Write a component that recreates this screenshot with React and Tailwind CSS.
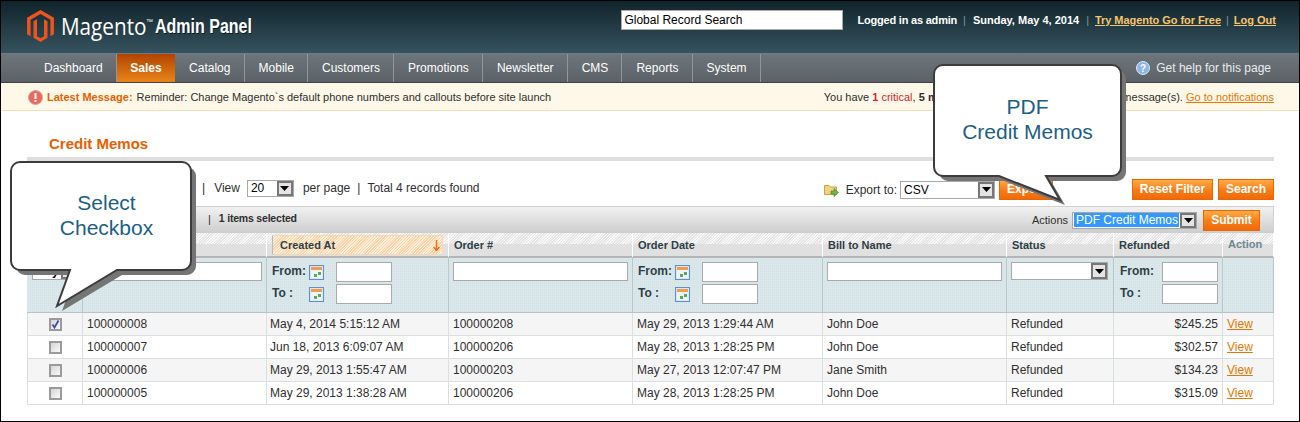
import React from "react";

const FONT = "font-['Liberation_Sans',Arial,sans-serif]";
const rows = [
  ["100000008", "May 4, 2014 5:15:12 AM", "100000208", "May 29, 2013 1:29:44 AM", "John Doe", "$245.25", true],
  ["100000007", "Jun 18, 2013 6:09:07 AM", "100000206", "May 28, 2013 1:28:25 PM", "John Doe", "$302.57", false],
  ["100000006", "May 29, 2013 1:55:47 AM", "100000203", "May 27, 2013 12:07:47 PM", "Jane Smith", "$134.23", false],
  ["100000005", "May 29, 2013 1:38:28 AM", "100000206", "May 28, 2013 1:28:25 PM", "John Doe", "$315.09", false],
];
const navItems = ["Dashboard", "Sales", "Catalog", "Mobile", "Customers", "Promotions", "Newsletter", "CMS", "Reports", "System"];

function Logo() {
  return (
    <svg width="27" height="32" viewBox="0 0 26 31" className="shrink-0">
      <path fill="#f0541e" d="M13 0 26 7.5V23.5L22.6 25.5V9.4L13 3.9 3.4 9.4V25.5L0 23.5V7.5Z" />
      <path fill="#f0541e" d="M6.2 11 9.6 9V25.4L13 27.4 16.4 25.4V9L19.8 11V27L13 31 6.2 27Z" />
    </svg>
  );
}

function Arrow() {
  return (
    <span className="flex h-full w-[16px] shrink-0 items-center justify-center border-2 border-[#777] bg-[#e4e4e4]">
      <svg width="9" height="5" viewBox="0 0 9 5"><path d="M0 0H9L4.500 5Z" fill="#000" /></svg>
    </span>
  );
}

function Select({ value, className }) {
  return (
    <div className={`flex items-center border border-[#a9a9a9] bg-white text-[12px] text-black ${className}`}>
      <span className="flex-1 truncate pl-[3px]">{value}</span>
      <Arrow />
    </div>
  );
}

function Btn({ children, className = "" }) {
  return (
    <button className={`h-[21px] border border-[#ed6502] bg-[linear-gradient(to_bottom,#ffac47,#f77c16_55%,#ed6a0a)] text-[12px] leading-[17px] font-bold text-white ${className}`}>
      {children}
    </button>
  );
}

function Calendar() {
  return (
    <svg width="15" height="15" viewBox="0 0 15 15" className="shrink-0">
      <rect x="0.500" y="0.500" width="14" height="14" fill="#dbe7f3" stroke="#5d8fc9" />
      <rect x="2" y="2" width="11" height="3" fill="#f59a4a" />
      <rect x="2" y="5" width="11" height="8" fill="#eef3f8" />
      <rect x="5" y="9" width="3" height="3" fill="#58ad58" />
      <rect x="9" y="7" width="3" height="3" fill="#58ad58" />
    </svg>
  );
}

function TextInput({ className }) {
  return <input readOnly className={`block border border-[#aaa] bg-white ${className}`} />;
}

function RangeRow({ label, cal }) {
  return (
    <div className="flex h-[20px] items-center">
      <span className="mb-[2px] w-[37px] text-[12px] font-bold text-[#2f3f45]">{label}</span>
      {cal ? <Calendar /> : <span className="w-[5px]" />}
      <TextInput className={cal ? "ml-[12px] h-[20px] w-[56px]" : "h-[20px] w-[56px]"} />
    </div>
  );
}

function Range({ cal = true }) {
  return (
    <div className={`flex flex-col gap-[2px] ${cal ? "pl-[5px]" : "pl-[6px]"}`}>
      <RangeRow label="From:" cal={cal} />
      <RangeRow label="To :" cal={cal} />
    </div>
  );
}

function Checkbox({ checked }) {
  return (
    <span className="mx-auto flex h-[13px] w-[13px] items-center justify-center border-2 border-[#9a9a9a] bg-[linear-gradient(135deg,#d5d5d5,#fafafa)]">
      {checked && (
        <svg width="9" height="9" viewBox="0 0 9 9"><path d="M1.500 4.500 3.500 7.500 7.500 0.500" fill="none" stroke="#3b4fa0" strokeWidth="1.800" /></svg>
      )}
    </span>
  );
}

function Callout({ box, d, children, textClass }) {
  return (
    <div className={`absolute ${box}`}>
      <svg className="absolute inset-0 h-full w-full" viewBox={children.viewBox}>
        <path d={d} fill="#757575" transform="translate(5 5)" />
        <path d={d} fill="#fff" stroke="#3c3c3c" strokeWidth="2" strokeLinejoin="miter" />
      </svg>
      <div className={`absolute text-center text-[21px] leading-[24.500px] text-[#1c5f88] ${textClass}`}>{children.text}</div>
    </div>
  );
}

const hatch = "border-r border-b-2 border-r-white border-b-[#b5b5b5] bg-[image:linear-gradient(to_bottom,transparent_50%,#e0e0e0_50%),repeating-linear-gradient(135deg,#f8f8f8_0,#f8f8f8_1px,#e4e4e4_1px,#e4e4e4_2px)] px-[5px] pt-[2px] text-left text-[11px] font-bold text-[#2f3f45]";
const filt = "border-r border-b border-r-[#bcc6c8] border-b-[#b9c3c5] bg-[#d2e1e5] bg-[image:linear-gradient(#dbe8eb_1px,transparent_1px),linear-gradient(90deg,#dbe8eb_1px,transparent_1px)] bg-[size:2px_2px] pt-[4px] text-left align-top";
const cell = "border-r border-b border-[#dadfe0] px-[4px] text-[12px] text-[#2f2f2f]";

export default function App() {
  return (
    <div className={`relative h-[422px] w-[1300px] overflow-hidden border border-black bg-white ${FONT}`}>
      {/* header */}
      <header className="flex h-[53px] items-start justify-between border-b border-[#64808a] bg-[linear-gradient(to_bottom,#10242b,#36535f)]">
        <div className="flex items-center pt-[9px] pl-[26px]">
          <Logo />
          <span className="ml-[7px] w-[85px] origin-left scale-x-[0.90] font-['Open_Sans',sans-serif] text-[23px] leading-[32px] text-white">Magento</span>
          <span className="mb-[8px] w-[8px] text-[7px] text-white">™</span>
          <span className="ml-px w-[96px] origin-left scale-x-[0.80] text-[20px] leading-[32px] font-bold whitespace-nowrap text-white [text-shadow:1px_1px_0_#0c1a1f]">Admin Panel</span>
        </div>
        <div className="flex items-center pt-[9px] pr-[23px] text-[11px] font-bold text-white">
          <input readOnly defaultValue="Global Record Search" className="h-[20px] w-[222px] border border-[#aaa] bg-white pl-[2px] text-[12px] font-normal text-black" />
          <span className="ml-[14px] tracking-[-0.2px]">Logged in as admin</span>
          <span className="mr-[7px] ml-[6px] font-normal text-[#7f97a0]">|</span>
          <span>Sunday, May 4, 2014</span>
          <span className="mr-[6px] ml-[7px] font-normal text-[#7f97a0]">|</span>
          <a className="tracking-[-0.05px] text-[#f8c56e] underline">Try Magento Go for Free</a>
          <span className="mx-[5px] font-normal text-[#7f97a0]">|</span>
          <a className="text-[#f8c56e] underline">Log Out</a>
        </div>
      </header>

      {/* nav */}
      <nav className="flex h-[29px] items-stretch justify-between border-b border-[#3e4347] bg-[linear-gradient(to_bottom,#6e757b,#5a6167)] pl-[29px] text-[12px] text-white">
        <ul className="flex">
          {navItems.map((n) =>
            n === "Sales" ? (
              <li key={n} className="flex items-center bg-[linear-gradient(to_bottom,#b24300,#e9851b)] px-[13.500px] font-bold">{n}</li>
            ) : (
              <li key={n} className={`flex items-center border-r border-[#8f979c] ${n === "Dashboard" ? "pr-[13px] pl-[14px]" : "pr-[13.100px] pl-[14px]"}`}>{n}</li>
            )
          )}
        </ul>
        <div className="flex items-center pr-[28px] text-[#e8ecee]">
          <svg width="14" height="14" viewBox="0 0 14 14" className="mr-[6px]">
            <circle cx="7" cy="7" r="6.500" fill="#8db8e6" stroke="#dbe9f7" />
            <text x="7" y="10.500" textAnchor="middle" fontSize="10" fontWeight="700" fill="#fff" fontFamily="Liberation Sans">?</text>
          </svg>
          <span>Get help for this page</span>
        </div>
      </nav>

      {/* notification */}
      <div className="flex h-[28px] items-center justify-between border-b border-[#eee0b9] bg-[#fef8e9] pt-px pr-[25px] pl-[27px] text-[11px] text-[#2f2f2f]">
        <div className="flex items-center">
          <svg width="15" height="15" viewBox="0 0 15 15" className="mr-[4px]">
            <circle cx="7.500" cy="7.500" r="7" fill="#e96a5c" stroke="#d9a49c" />
            <rect x="6.500" y="3" width="2" height="6" fill="#fff" />
            <rect x="6.500" y="10" width="2" height="2" fill="#fff" />
          </svg>
          <b className="mr-[4px] text-[#eb5e00]">Latest Message:</b>
          <span>Reminder: Change Magento`s default phone numbers and callouts before site launch</span>
        </div>
        <div>
          You have <span className="text-[#df1f26]"><b>1</b> critical</span>, <b>5 major</b>, <b>12 minor</b> and <b>14 notice</b> unread message(s).{" "}
          <a className="text-[#ea7601] underline">Go to notifications</a>
        </div>
      </div>

      {/* main */}
      <main className="pr-[25px] pl-[26px]">
        <h3 className="mt-[25px] ml-[22px] text-[15px] leading-[16px] font-bold text-[#eb5e00]">Credit Memos</h3>
        <div className="mt-[5px] h-[4px] bg-[#dfdfdf]" />

        {/* toolbar */}
        <div className="mt-[18px] flex h-[21px] items-center text-[12px] text-[#2f2f2f]">
          <div className="mb-[3px] flex items-center">
            <span className="ml-[175px]">|</span>
            <span className="ml-[9px]">View</span>
            <Select value="20" className="ml-[7px] h-[17px] w-[47px]" />
            <span className="ml-[9px]">per page</span>
            <span className="mx-[7px]">|</span>
            <span>Total 4 records found</span>
          </div>
          <div className="ml-auto flex items-center">
            <svg width="15" height="14" viewBox="0 0 15 14" className="mr-[7px]">
              <path d="M0.500 2.500H5L6.500 4H12.500V11.500H0.500Z" fill="#f3d27a" stroke="#c9a34b" />
              <path d="M7 8H10V5.500L14.500 9.500 10 13.500V11H7Z" fill="#6fb04a" stroke="#4b8a33" strokeWidth="0.700" />
            </svg>
            <span>Export to:</span>
            <Select value="CSV" className="ml-[3px] h-[18px] w-[95px]" />
            <Btn className="ml-[4px] w-[54px]">Export</Btn>
            <Btn className="ml-[79px] w-[81px]">Reset Filter</Btn>
            <Btn className="ml-[5px] w-[56px]">Search</Btn>
          </div>
        </div>

        {/* mass action */}
        <div className="mt-[6px] flex h-[27px] items-center border-x border-t border-[#d2d2d2] bg-[linear-gradient(to_bottom,#f1f1f1,#cdcdcd)] pr-[13px] text-[11px] text-[#2f2f2f]">
          <div className="mb-[2px] flex">
            <span className="ml-[180px]">|</span>
            <b className="ml-[8px] text-[10.500px] tracking-[-0.2px]">1 items selected</b>
          </div>
          <span className="mr-px ml-auto">Actions</span>
          <div className="ml-[3px] flex h-[17px] w-[125px] items-center border border-[#a9a9a9] bg-white text-[12px]">
            <span className="mx-px flex-1 bg-[#3399ff] pl-[2px] leading-[14px] whitespace-nowrap text-white">PDF Credit Memos</span>
            <Arrow />
          </div>
          <Btn className="ml-[6px] w-[57px]">Submit</Btn>
        </div>

        {/* grid */}
        <table className="w-[1247px] table-fixed border-separate border-spacing-0">
          <colgroup>
            <col className="w-[56px]" /><col className="w-[184px]" /><col className="w-[182px]" /><col className="w-[184px]" />
            <col className="w-[190px]" /><col className="w-[184px]" /><col className="w-[107px]" /><col className="w-[109px]" /><col className="w-[51px]" />
          </colgroup>
          <thead>
            <tr className="h-[25px]">
              <th className={hatch} />
              <th className={hatch}>Credit Memo #</th>
              <th className={`${hatch} pb-px`}>
                <div className="flex h-[20px] items-center justify-between border border-[#f3d9b8] border-l-[#bbb] bg-[repeating-linear-gradient(135deg,#feeeda_0,#feeeda_1px,#fad3a9_1px,#fad3a9_2px)] pr-[2px] pl-[7px]">
                  <span>Created At</span>
                  <svg width="7" height="11" viewBox="0 0 7 11"><path d="M3.500 0V10M0.500 7 3.500 10.500 6.500 7" stroke="#f26b0f" strokeWidth="1.400" fill="none" /></svg>
                </div>
              </th>
              <th className={hatch}>Order #</th>
              <th className={hatch}>Order Date</th>
              <th className={hatch}>Bill to Name</th>
              <th className={hatch}>Status</th>
              <th className={hatch}>Refunded</th>
              <th className={`${hatch} pb-[3px] text-[#6e8791]`}>Action</th>
            </tr>
            <tr className="h-[55px]">
              <th className={`${filt} pl-[5px]`}><Select value="Any" className="h-[18px] w-[46px]" /></th>
              <th className={`${filt} pl-[4px]`}><TextInput className="h-[19px] w-[175px]" /></th>
              <th className={filt}><Range /></th>
              <th className={`${filt} pl-[4px]`}><TextInput className="h-[19px] w-[175px]" /></th>
              <th className={filt}><Range /></th>
              <th className={`${filt} pl-[4px]`}><TextInput className="h-[19px] w-[175px]" /></th>
              <th className={`${filt} pl-[4px]`}><Select value="" className="h-[18px] w-[97px]" /></th>
              <th className={filt}><Range cal={false} /></th>
              <th className={filt} />
            </tr>
          </thead>
          <tbody>
            {rows.map((r, i) => (
              <tr key={r[0]} className={`h-[23px] ${i % 2 === 0 ? "bg-[#f5f5f5]" : "bg-white"}`}>
                <td className={`${cell} border-l`}><Checkbox checked={r[6]} /></td>
                <td className={cell}>{r[0]}</td>
                <td className={`${cell} pl-[3px] whitespace-nowrap`}>{r[1]}</td>
                <td className={cell}>{r[2]}</td>
                <td className={`${cell} whitespace-nowrap`}>{r[3]}</td>
                <td className={cell}>{r[4]}</td>
                <td className={cell}>Refunded</td>
                <td className={`${cell} text-right`}>{r[5]}</td>
                <td className={cell}><a className="text-[#ea7601] underline">View</a></td>
              </tr>
            ))}
          </tbody>
        </table>
      </main>

      {/* callouts */}
      <Callout
        box="left-[8px] top-[158px] h-[155px] w-[205px]"
        textClass="left-[0px] top-[32px] w-[195px]"
        d="M19 3H181A9 9 0 0 1 190 12V102A9 9 0 0 1 181 111H116L56 147 69 111H19A9 9 0 0 1 10 102V12A9 9 0 0 1 19 3Z"
      >
        {{ viewBox: "8 0 205 155", text: <>Select<br />Checkbox</> }}
      </Callout>
      <Callout
        box="left-[930px] top-[62px] h-[145px] w-[205px]"
        textClass="left-0 top-[32px] w-[193px]"
        d="M12 2H181A9 9 0 0 1 190 11V104A9 9 0 0 1 181 113H115L129 137 68 113H12A9 9 0 0 1 3 104V11A9 9 0 0 1 12 2Z"
      >
        {{ viewBox: "0 0 205 145", text: <>PDF<br />Credit Memos</> }}
      </Callout>
    </div>
  );
}
